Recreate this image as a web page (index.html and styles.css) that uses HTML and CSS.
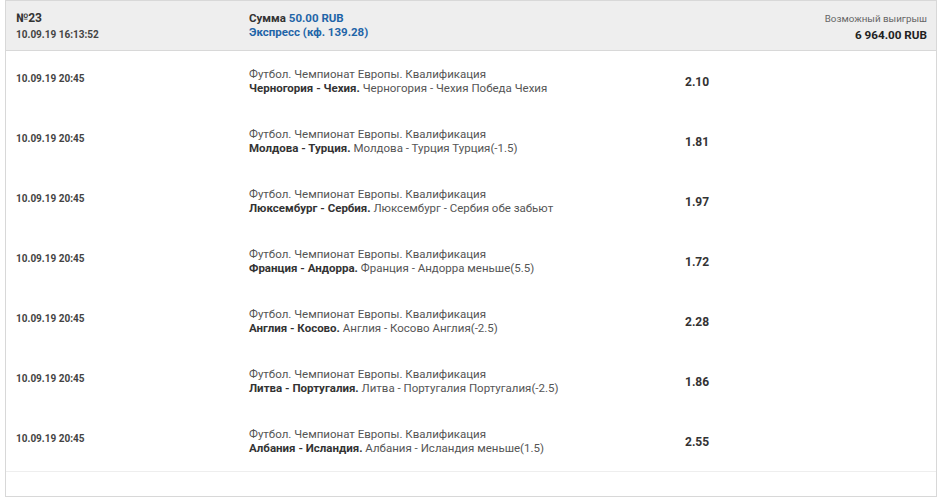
FILE: index.html
```html
<!DOCTYPE html>
<html lang="ru">
<head>
<meta charset="utf-8">
<title>Ставка №23</title>
<link rel="stylesheet" href="styles.css">
</head>
<body>
<div class="bet">
  <div class="bet-head">
    <div class="cell">
      <div class="num">№23</div>
      <div class="date">10.09.19 16:13:52</div>
    </div>
    <div class="cell">
      <div class="sum">Сумма <span class="blue">50.00 RUB</span></div>
      <div class="blue">Экспресс (кф. 139.28)</div>
    </div>
    <div class="cell right">
      <div class="win-label">Возможный выигрыш</div>
      <div class="win">6 964.00 RUB</div>
    </div>
  </div>
  <div class="rows">
    <div class="row">
      <div class="date">10.09.19 20:45</div>
      <div class="event"><div>Футбол. Чемпионат Европы. Квалификация</div><div><b>Черногория - Чехия.</b> Черногория - Чехия Победа Чехия</div></div>
      <div class="odd">2.10</div>
    </div>
    <div class="row">
      <div class="date">10.09.19 20:45</div>
      <div class="event"><div>Футбол. Чемпионат Европы. Квалификация</div><div><b>Молдова - Турция.</b> Молдова - Турция Турция(-1.5)</div></div>
      <div class="odd">1.81</div>
    </div>
    <div class="row">
      <div class="date">10.09.19 20:45</div>
      <div class="event"><div>Футбол. Чемпионат Европы. Квалификация</div><div><b>Люксембург - Сербия.</b> Люксембург - Сербия обе забьют</div></div>
      <div class="odd">1.97</div>
    </div>
    <div class="row">
      <div class="date">10.09.19 20:45</div>
      <div class="event"><div>Футбол. Чемпионат Европы. Квалификация</div><div><b>Франция - Андорра.</b> Франция - Андорра меньше(5.5)</div></div>
      <div class="odd">1.72</div>
    </div>
    <div class="row">
      <div class="date">10.09.19 20:45</div>
      <div class="event"><div>Футбол. Чемпионат Европы. Квалификация</div><div><b>Англия - Косово.</b> Англия - Косово Англия(-2.5)</div></div>
      <div class="odd">2.28</div>
    </div>
    <div class="row">
      <div class="date">10.09.19 20:45</div>
      <div class="event"><div>Футбол. Чемпионат Европы. Квалификация</div><div><b>Литва - Португалия.</b> Литва - Португалия Португалия(-2.5)</div></div>
      <div class="odd">1.86</div>
    </div>
    <div class="row">
      <div class="date">10.09.19 20:45</div>
      <div class="event"><div>Футбол. Чемпионат Европы. Квалификация</div><div><b>Албания - Исландия.</b> Албания - Исландия меньше(1.5)</div></div>
      <div class="odd">2.55</div>
    </div>
  </div>
  <div class="bet-foot"></div>
</div>
</body>
</html>
```
FILE: styles.css
```css
html, body {
  margin: 0;
  padding: 0;
  background: #fff;
}
body {
  padding: 0 1px 0 5px;
  font-family: Roboto, "Liberation Sans", Arial, sans-serif;
  font-size: 11.5px;
  color: #555;
}
.bet {
  border: 1px solid #d8d8d8;
  width: 930px;
}
.bet-head {
  display: grid;
  grid-template-columns: 233px 1fr 240px;
  background: #eeeeee;
  border-bottom: 1px solid #d8d8d8;
  padding: 10px 9px 0 10px;
  box-sizing: border-box;
  height: 50px;
}
.num {
  font-weight: 700;
  font-size: 12px;
  color: #333;
  line-height: 15px;
}
.bet-head .date {
  line-height: 17px;
}
.sum {
  font-weight: 700;
  color: #333;
  line-height: 14px;
}
.blue {
  color: #1f65a8;
  font-weight: 700;
  line-height: 14px;
}
.right {
  text-align: right;
}
.bet-head .right {
  margin-top: -1px;
}
.win-label {
  font-size: 9.8px;
  color: #666;
  line-height: 17px;
}
.win {
  font-weight: 700;
  font-size: 11.7px;
  color: #222;
  line-height: 17px;
}
.date {
  font-size: 10px;
  font-weight: 700;
  color: #444;
}
.rows {
  border-bottom: 1px solid #eeeeee;
}
.row {
  display: grid;
  grid-template-columns: 233px 436px 1fr;
  align-items: center;
  height: 60px;
  box-sizing: border-box;
  padding: 0 9px 2px 10px;
}
.row .date {
  margin-bottom: 4px;
}
.event {
  line-height: 14px;
  color: #555;
  padding-top: 1px;
}
.event b {
  color: #333;
}
.odd {
  font-weight: 700;
  font-size: 12px;
  color: #333;
  padding-top: 3px;
}
.bet-foot {
  height: 24px;
}
```
